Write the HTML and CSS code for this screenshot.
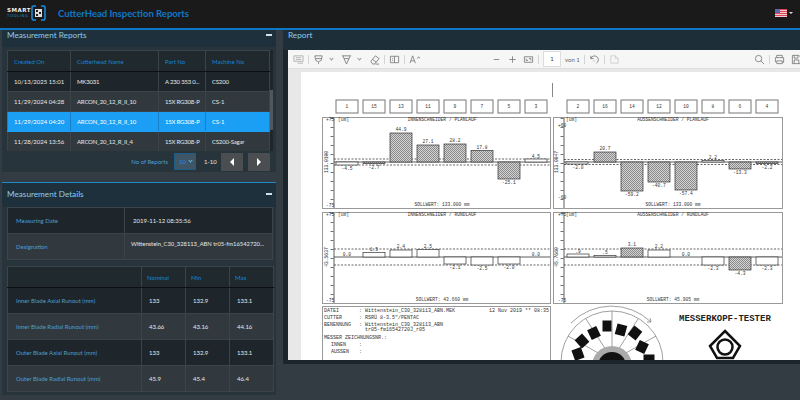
FILE: index.html
```html
<!DOCTYPE html>
<html lang="en">
<head>
    <meta charset="UTF-8">
    <title>CutterHead Inspection Reports</title>
    <link rel="stylesheet" href="styles.css">
</head>
<body>
    <header class="topbar">
        <div class="logo">
            <div class="logo-words">
                <span class="logo-smart">SMART</span>
                <span class="logo-tooling">TOOLING</span>
            </div>
            <svg class="logo-mark" width="15" height="16" viewBox="0 0 15 16">
                <path d="M5 1H2.500Q1 1 1 2.500V13.500Q1 15 2.500 15H5M10 1H12.500Q14 1 14 2.500V13.500Q14 15 12.500 15H10" fill="none" stroke="#1a8fe0" stroke-width="1.500"/>
                <rect x="4" y="4" width="7" height="8" fill="#ddd"/>
                <path d="M5 5h2v2H5zM8 7h2v2H8zM5 9h2v2H5z" fill="#222"/>
            </svg>
        </div>
        <h1 class="app-title">CutterHead Inspection Reports</h1>
        <div class="lang">
            <svg width="12" height="8" viewBox="0 0 12 8">
                <rect width="12" height="8" fill="#f4c8cc"/>
                <path d="M0 .5h12M0 2.500h12M0 4.500h12M0 6.500h12" stroke="#d9485a" stroke-width="1"/>
                <rect width="5" height="4" fill="#5a68a8"/>
            </svg>
            <span class="caret"></span>
        </div>
    </header>

    <main class="layout">
        <div class="left-col">
            <section class="panel panel-reports">
                <div class="panel-head">
                    <h2>Measurement Reports</h2>
                    <span class="collapse"></span>
                </div>
                <div class="reports-box">
                    <table class="grid reports">
                        <colgroup>
                            <col class="c-date"><col class="c-name"><col class="c-part"><col class="c-machine">
                        </colgroup>
                        <thead>
                            <tr><th>Created On</th><th>Cutterhead Name</th><th>Part No</th><th>Machine No</th></tr>
                        </thead>
                        <tbody>
                            <tr><td>10/13/2025 15:01</td><td>MK3031</td><td>A 230 353 0...</td><td>CS200</td></tr>
                            <tr class="alt"><td>11/29/2024 04:28</td><td>ARCON_20_12_R_II_10</td><td>15X RG308-P</td><td>CS-1</td></tr>
                            <tr class="selected"><td>11/29/2024 04:20</td><td>ARCON_20_12_R_II_10</td><td>15X RG308-P</td><td>CS-1</td></tr>
                            <tr class="alt"><td>11/28/2024 13:56</td><td>ARCON_20_12_R_II_4</td><td>15X RG308-P</td><td>CS200-Sagar</td></tr>
                        </tbody>
                    </table>
                    <div class="scrollbar"><div class="thumb"></div></div>
                </div>
                <div class="pager">
                    <span class="pager-label">No of Reports</span>
                    <span class="page-size">10 <i class="chev"></i></span>
                    <span class="page-range">1-10</span>
                    <button class="page-btn"><span class="tri-left"></span></button>
                    <button class="page-btn"><span class="tri-right"></span></button>
                </div>
            </section>

            <section class="panel panel-details">
                <div class="panel-head head-tall">
                    <h2>Measurement Details</h2>
                    <span class="collapse"></span>
                </div>
                <table class="grid info">
                    <colgroup><col class="c-key"><col></colgroup>
                    <tr><td class="key">Measuring Date</td><td>2019-11-12 08:35:56</td></tr>
                    <tr class="alt"><td class="key">Designation</td><td class="top">Wittenstein_C30_328113_ABN tr05-fm16542720...</td></tr>
                </table>
                <table class="grid limits">
                    <colgroup><col class="c-label"><col class="c-num"><col class="c-num"><col class="c-num"></colgroup>
                    <thead>
                        <tr><th></th><th>Nominal</th><th>Min</th><th>Max</th></tr>
                    </thead>
                    <tbody>
                        <tr><td class="key">Inner Blade Axial Runout (mm)</td><td>133</td><td>132.9</td><td>133.1</td></tr>
                        <tr class="alt"><td class="key">Inner Blade Radial Runout (mm)</td><td>43.66</td><td>43.16</td><td>44.16</td></tr>
                        <tr><td class="key">Outer Blade Axial Runout (mm)</td><td>133</td><td>132.9</td><td>133.1</td></tr>
                        <tr class="alt"><td class="key">Outer Blade Radial Runout (mm)</td><td>45.9</td><td>45.4</td><td>46.4</td></tr>
                    </tbody>
                </table>
            </section>
        </div>

        <section class="panel panel-report">
            <div class="panel-head head-report">
                <h2>Report</h2>
            </div>
            <div class="viewer">
                <div class="toolbar">
                    <svg class="ico i-list" viewBox="0 0 12 12"><path d="M1 2h10v6H1zM3 4h6M3 6h6M5 10h6"/></svg>
                    <span class="sep"></span>
                    <svg class="ico" viewBox="0 0 12 12"><path d="M2 2h8M2 2l1 5q3 3 6 0l1-5M3 5h6M6 9v2"/></svg>
                    <span class="down"></span>
                    <svg class="ico gap-l" viewBox="0 0 12 12"><path d="M1 2h10M2 2l4 9 4-9M3.500 5h5"/></svg>
                    <span class="down"></span>
                    <svg class="ico gap-l" viewBox="0 0 12 12"><path d="M2 8l5-6 4 3-5 6H4zM4 6l4 3M7 11h4"/></svg>
                    <span class="sep"></span>
                    <svg class="ico" viewBox="0 0 12 12"><path d="M1.500 2.500h9v7h-9zM6 2.500v7M3.500 5h1M3.500 7h1"/></svg>
                    <span class="sep"></span>
                    <svg class="ico" viewBox="0 0 12 12"><path d="M1 10l3-8 3 8M2.200 7.500h3.600M9 5l1.500-2L12 5"/></svg>
                    <span class="tool-mid">
                        <svg class="ico" viewBox="0 0 12 12"><path d="M3 6h6"/></svg>
                        <svg class="ico gap-m" viewBox="0 0 12 12"><path d="M2.500 6h7M6 2.500v7"/></svg>
                        <svg class="ico gap-m" viewBox="0 0 12 12"><path d="M1.500 3h9v6h-9zM3.500 5v2h2M8.500 7V5h-2"/></svg>
                        <span class="sep"></span>
                        <span class="page-input">1</span>
                        <span class="page-of">von 1</span>
                        <span class="sep"></span>
                        <svg class="ico" viewBox="0 0 12 12"><path d="M2 5a4.200 4.200 0 1 1 6 5M2 2v3h3M5 7.500h1"/></svg>
                        <span class="sep"></span>
                        <svg class="ico faint" viewBox="0 0 12 12"><path d="M2 2h5l3 3v5H2zM7 2v3h3"/></svg>
                    </span>
                    <span class="tool-end">
                        <svg class="ico" viewBox="0 0 12 12"><circle cx="5" cy="5" r="3.500"/><path d="M7.500 7.500l3.500 3.500"/></svg>
                        <span class="sep"></span>
                        <svg class="ico" viewBox="0 0 12 12"><path d="M3 4V1.500h6V4M1.500 9V4h9v5H9M3 7.500h6v3H3z"/></svg>
                        <svg class="ico gap-save" viewBox="0 0 12 12"><path d="M1.500 1.500h7l2 2v7h-9zM3.500 1.500v3h4v-3M3.500 10.500v-4h5v4"/></svg>
                    </span>
                </div>
                <div class="viewer-body">
                    <div class="page">
                        <svg class="sheet" viewBox="301 72 499 288" preserveAspectRatio="xMinYMin slice">
                            <defs>
                                <pattern id="hatch" width="2" height="2" patternUnits="userSpaceOnUse">
                                    <rect width="2" height="2" fill="#d4d4d4"/>
                                    <rect width="1" height="1" fill="#8a8a8a"/>
                                    <rect x="1" y="1" width="1" height="1" fill="#8a8a8a"/>
                                </pattern>
                            </defs>

                            <rect class="mark" x="552" y="83" width="1" height="14"/>

                            <!-- blade numbers -->
                            <g class="slot">
                                <rect x="336" y="100" width="22" height="13"/><rect x="363" y="100" width="22" height="13"/><rect x="390" y="100" width="22" height="13"/><rect x="417" y="100" width="22" height="13"/>
                                <rect x="444" y="100" width="22" height="13"/><rect x="471" y="100" width="22" height="13"/><rect x="498" y="100" width="22" height="13"/><rect x="525" y="100" width="22" height="13"/>
                                <rect x="567" y="100" width="22" height="13"/><rect x="594" y="100" width="22" height="13"/><rect x="621" y="100" width="22" height="13"/><rect x="648" y="100" width="22" height="13"/>
                                <rect x="675" y="100" width="22" height="13"/><rect x="702" y="100" width="22" height="13"/><rect x="729" y="100" width="22" height="13"/><rect x="756" y="100" width="22" height="13"/>
                            </g>
                            <g class="txt mid">
                                <text x="347" y="108">1</text><text x="374" y="108">15</text><text x="401" y="108">13</text><text x="428" y="108">11</text>
                                <text x="455" y="108">9</text><text x="482" y="108">7</text><text x="509" y="108">5</text><text x="536" y="108">3</text>
                                <text x="578" y="108">2</text><text x="605" y="108">16</text><text x="632" y="108">14</text><text x="659" y="108">12</text>
                                <text x="686" y="108">10</text><text x="713" y="108">8</text><text x="740" y="108">6</text><text x="767" y="108">4</text>
                            </g>

                            <!-- chart frames -->
                            <g class="frame">
                                <rect x="322.500" y="117.500" width="228" height="91"/>
                                <rect x="553.500" y="117.500" width="229" height="91"/>
                                <rect x="322.500" y="212.500" width="228" height="91"/>
                                <rect x="553.500" y="212.500" width="229" height="91"/>
                            </g>
                            <g class="axis">
                                <path d="M334 118V208M564 118V208M334 213V303M564 213V303"/>
                                <path d="M334 162H550M564 162H782M334 257H550M564 257H782"/>
                            </g>
                            <g class="ticks">
                                <path d="M332 118V208M562 118V208M332 213V303M562 213V303"/>
                            </g>
                            <g class="limit">
                                <path d="M334 159H550M334 165H550M564 159.500H782M564 164.500H782"/>
                                <path d="M334 249H550M334 265H550M564 249H782M564 265H782"/>
                            </g>

                            <!-- planlauf bars -->
                            <g class="bar hatched">
                                <rect x="390" y="133" width="22" height="29"/><rect x="417" y="145" width="22" height="17"/><rect x="444" y="144" width="22" height="18"/><rect x="471" y="150.500" width="22" height="11.500"/>
                                <rect x="498" y="162" width="22" height="17"/><rect x="363" y="162" width="22" height="1.500"/>
                                <rect x="594" y="152" width="22" height="10"/><rect x="621" y="162" width="22" height="29"/><rect x="648" y="162" width="22" height="20"/><rect x="675" y="162" width="22" height="28"/>
                                <rect x="729" y="162" width="22" height="7"/><rect x="756" y="162" width="22" height="1.500"/>
                                <rect x="621" y="248" width="22" height="9"/><rect x="729" y="257" width="22" height="13"/>
                            </g>
                            <!-- plain bars -->
                            <g class="bar">
                                <rect x="525" y="159" width="22" height="3"/><rect x="336" y="162" width="22" height="3"/><rect x="566" y="162" width="22" height="2"/><rect x="702" y="160.500" width="22" height="1.500"/>
                                <rect x="363" y="252.500" width="22" height="4.500"/><rect x="390" y="250" width="22" height="7"/><rect x="417" y="249.500" width="22" height="7.500"/>
                                <rect x="444" y="257" width="22" height="7"/><rect x="471" y="257" width="22" height="8"/><rect x="498" y="257" width="22" height="7"/>
                                <rect x="567" y="254" width="22" height="3"/><rect x="594" y="255.500" width="22" height="1.500"/><rect x="648" y="250" width="22" height="7"/>
                                <rect x="702" y="257" width="22" height="8"/><rect x="756" y="257" width="22" height="8"/>
                            </g>

                            <g class="txt">
                                <text x="326" y="121">+75</text><text x="338" y="121">[um]</text>
                                <text x="326" y="207">-75</text>
                                <text x="566" y="121">[um]</text><text x="558" y="127">+60</text><text x="558" y="199">-60</text>
                                <text x="326" y="216">+75</text><text x="338" y="216">[um]</text><text x="326" y="302">-75</text>
                                <text x="558" y="216">+75</text><text x="566" y="216">[um]</text><text x="558" y="302">-75</text>
                                <text class="side" transform="translate(328 162) rotate(-90)">133.0100</text>
                                <text class="side" transform="translate(558 162) rotate(-90)">133.0047</text>
                                <text class="side" transform="translate(328 257) rotate(-90)">43.5637</text>
                                <text class="side" transform="translate(558 257) rotate(-90)">45.7660</text>
                            </g>
                            <g class="txt mid">
                                <text x="442" y="121">INNENSCHNEIDER / PLANLAUF</text>
                                <text x="673" y="121">AUSSENSCHNEIDER / PLANLAUF</text>
                                <text x="442" y="216">INNENSCHNEIDER / RUNDLAUF</text>
                                <text x="673" y="216">AUSSENSCHNEIDER / RUNDLAUF</text>
                                <text x="442" y="206">SOLLWERT: 133.000 mm</text>
                                <text x="673" y="206">SOLLWERT: 133.000 mm</text>
                                <text x="442" y="301">SOLLWERT:  43.660 mm</text>
                                <text x="673" y="301">SOLLWERT:  45.905 mm</text>

                                <text x="347" y="170">-4.5</text><text x="374" y="169">-2.7</text><text x="401" y="131">44.9</text><text x="428" y="143">27.1</text>
                                <text x="455" y="142">28.2</text><text x="482" y="149">17.8</text><text x="509" y="184">-25.1</text><text x="536" y="158">4.5</text>
                                <text x="578" y="169">-2.0</text><text x="605" y="150">20.7</text><text x="632" y="196">-59.2</text><text x="659" y="187">-40.7</text>
                                <text x="686" y="195">-57.4</text><text x="713" y="159">2.2</text><text x="740" y="174">-13.3</text><text x="767" y="169">-2.2</text>

                                <text x="347" y="256">0.0</text><text x="374" y="251">1.5</text><text x="401" y="248">2.4</text><text x="428" y="248">2.5</text>
                                <text x="455" y="269">-2.1</text><text x="482" y="270">-2.5</text><text x="509" y="269">-2.0</text><text x="536" y="256">0.0</text>
                                <text x="578" y="253">.9</text><text x="605" y="254">.5</text><text x="632" y="246">3.1</text><text x="659" y="248">2.2</text>
                                <text x="686" y="256">0.0</text><text x="713" y="270">-2.3</text><text x="740" y="275">-4.3</text><text x="767" y="270">-2.3</text>
                            </g>

                            <!-- file data box -->
                            <rect class="frame-line" x="322.500" y="306.500" width="228" height="70"/>
                            <g class="data">
                                <text x="324" y="312">DATEI</text><text x="359" y="312">:</text><text x="365" y="312">Wittenstein_C30_328113_ABN.MEK</text>
                                <text x="489" y="312">12 Nov 2019 ** 08:35</text>
                                <text x="324" y="318.500">CUTTER</text><text x="359" y="318.500">:</text><text x="365" y="318.500">RSRÜ 8-3.5"/PENTAC</text>
                                <text x="324" y="325.500">BENENNUNG</text><text x="359" y="325.500">:</text><text x="365" y="325.500">Wittenstein_C30_328113_ABN</text>
                                <text x="365" y="330.500">tr05-fm16542720J_r05</text>
                                <text x="324" y="339">MESSER ZEICHNUNGSNR.:</text>
                                <text x="331" y="346">INNEN</text><text x="359" y="346">:</text>
                                <text x="331" y="352.500">AUSSEN</text><text x="359" y="352.500">:</text>
                            </g>

                            <!-- cutter head diagram -->
                            <path class="thin" d="M571 323A57 57 0 0 1 651 322M651 322l-4 0M651 322l-1 -4"/>
                            <circle class="thin" cx="612" cy="362" r="51"/>
                            <path class="thin" d="M612 311V350M586 319L606 350M638 319L618 350M568 336L600 354M656 336L624 354"/>
                            <circle cx="612" cy="366" r="20" fill="#aaa"/>
                            <circle cx="612" cy="366" r="14" fill="#111"/>
                            <g class="block">
                                <rect x="-5" y="-5.500" width="10" height="11" transform="translate(578 354) rotate(-20)"/>
                                <rect x="-5" y="-5.500" width="10" height="11" transform="translate(582 341) rotate(-42)"/>
                                <rect x="-5" y="-5.500" width="10" height="11" transform="translate(594 333) rotate(-25)"/>
                                <rect x="-4.500" y="-5.500" width="9" height="11" transform="translate(607 326)"/>
                                <rect x="-5" y="-5.500" width="10" height="11" transform="translate(621 330) rotate(15)"/>
                                <rect x="-5" y="-5.500" width="10" height="11" transform="translate(635 333) rotate(38)"/>
                                <rect x="-5" y="-5.500" width="10" height="11" transform="translate(642 347) rotate(25)"/>
                                <rect x="-5.500" y="-5.500" width="11" height="11" transform="translate(649 360)"/>
                            </g>
                            <text class="brand" x="679" y="321">MESSERKOPF-TESTER</text>
                            <path class="brand-mark" d="M725 331L740 346L733 358H717L710 346Z"/>
                            <circle class="brand-mark" cx="725" cy="347" r="7.500"/>
                        </svg>
                    </div>
                </div>
            </div>
        </section>
    </main>
</body>
</html>
```

FILE: styles.css
```css
* {
    box-sizing: border-box;
}
body {
    margin: 0;
    width: 800px;
    height: 400px;
    overflow: hidden;
    background-color: #323c42;
    font-family: Lato, "Open Sans", sans-serif;
    color: #e4e8ea;
}

/* top bar */
.topbar {
    display: flex;
    align-items: center;
    height: 30px;
    padding: 0 7px 2px 7px;
    background-color: #1a1a1b;
    border-bottom: 2px solid #0f78c6;
}
.logo {
    display: flex;
    align-items: center;
    gap: 0;
    width: 51px;
}
.logo-words {
    display: flex;
    flex-direction: column;
    width: 24px;
    line-height: 5px;
    font-family: "DejaVu Sans", sans-serif;
}
.logo-smart {
    font-size: 5.500px;
    font-weight: bold;
    letter-spacing: .5px;
    color: #f0f0f0;
}
.logo-tooling {
    font-size: 3.800px;
    letter-spacing: .6px;
    color: #1a8fe0;
}
.app-title {
    margin: 0;
    font-size: 9.500px;
    font-weight: bold;
    color: #0f78c6;
}
.lang {
    display: flex;
    align-items: center;
    gap: 2px;
    margin-left: auto;
}
.caret {
    border: 2px solid transparent;
    border-top: 2px solid #ddd;
    border-bottom: 0;
}

/* columns */
.layout {
    display: flex;
    gap: 7px;
    padding-left: 2px;
}
.left-col {
    display: flex;
    flex-direction: column;
    gap: 10px;
    width: 274px;
}
.panel {
    background-color: #27343b;
}
.panel-head {
    display: flex;
    align-items: center;
    justify-content: space-between;
    height: 17px;
    padding: 0 4px 8px 5px;
    background-color: #1e303b;
}
.panel-head h2 {
    margin: 0;
    font-size: 8.200px;
    font-weight: normal;
    color: #8fcbea;
}
.panel-head.head-tall {
    height: 25px;
    padding-bottom: 3px;
    border-top: 1px solid #1f88c8;
}
.panel-head.head-report {
    height: 20px;
    padding-bottom: 11px;
    background-color: #1d2e39;
}
.collapse {
    width: 6px;
    height: 2px;
    background-color: #cfe0ea;
}

/* tables */
.grid {
    width: 100%;
    table-layout: fixed;
    border-collapse: collapse;
    background-color: #1e262b;
    font-size: 6px;
}
.grid th {
    padding: 0 0 0 6px;
    height: 21px;
    text-align: left;
    font-weight: normal;
    color: #1785d8;
    background-color: #20292e;
    border: 1px solid #3b4449;
    border-bottom: 1px solid #0c1012;
}
.grid td {
    padding: 0 0 0 6px;
    border: 1px solid #3b4449;
    color: #e4e8ea;
    white-space: nowrap;
    overflow: hidden;
}
.grid .alt td {
    background-color: #31393e;
}
.grid .key {
    padding-left: 8px;
    color: #4d9fd3;
}
.reports-box {
    display: flex;
    height: 101px;
    margin: 3px 3px 0 5px;
    overflow: hidden;
}
.reports {
    width: 263px;
    height: 101px;
}
.reports td {
    height: 20px;
}
.reports td:nth-child(n+2) {
    letter-spacing: -.2px;
}
.reports .selected td {
    background-color: #1a9ff5;
    border-color: #1a9ff5 #1580c8;
    color: #fff;
}
.c-date { width: 63px; }
.c-name { width: 88px; }
.c-part { width: 47px; }
.scrollbar {
    width: 3px;
    padding-top: 40px;
    background-color: #1e262b;
}
.thumb {
    height: 40px;
    background-color: #50585d;
}

/* pager */
.pager {
    display: flex;
    align-items: center;
    height: 21px;
    padding-right: 6px;
    justify-content: flex-end;
    font-size: 6px;
}
.pager-label {
    margin-right: 6px;
    color: #4d9fd3;
}
.page-size {
    display: flex;
    align-items: center;
    gap: 3px;
    width: 22px;
    height: 17px;
    padding-left: 4px;
    border: 1px solid #1d5d85;
    background-color: #3f5666;
    color: #1a8fe0;
}
.chev {
    width: 3px;
    height: 3px;
    margin-top: -2px;
    border-right: 1px solid #5ab4ea;
    border-bottom: 1px solid #5ab4ea;
    transform: rotate(45deg);
}
.page-range {
    width: 13px;
    margin-left: 8px;
}
.page-btn {
    display: flex;
    align-items: center;
    justify-content: center;
    width: 22px;
    height: 18px;
    margin-left: 4px;
    padding: 0;
    border: 0;
    border-radius: 1px;
    background-color: #4b4e50;
}
.page-btn + .page-btn {
    margin-left: 5px;
}
.tri-left {
    border: 4px solid transparent;
    border-right: 4px solid #fff;
    border-left: 0;
}
.tri-right {
    border: 4px solid transparent;
    border-left: 4px solid #fff;
    border-right: 0;
}

/* details */
.panel-details {
    padding-bottom: 3px;
}
.info {
    width: 266px;
    margin: 0 0 0 5px;
}
.info td {
    height: 26px;
}
.info td:last-child {
    padding-left: 8px;
}
.info td.top {
    padding: 0 0 6px 6px;
    font-size: 5.800px;
}
.c-key { width: 117px; }
.limits {
    width: 266px;
    margin: 6px 0 0 5px;
}
.limits th {
    padding-left: 5px;
}
.limits td {
    height: 26px;
}
.limits td:not(.key) {
    padding-left: 7px;
}
.c-label { width: 134px; }
.c-num { width: 44px; }

/* report viewer */
.panel-report {
    flex: 1;
    height: 334px;
    padding-bottom: 4px;
    background-color: #1c252b;
}
.viewer {
    display: flex;
    flex-direction: column;
    height: 310px;
    margin-left: 5px;
    background-color: #e8e8e8;
}
.toolbar {
    display: flex;
    align-items: center;
    flex-shrink: 0;
    height: 19px;
    padding-left: 5px;
    background-color: #f6f6f6;
    border-bottom: 1px solid #ddd;
    overflow: hidden;
}
.ico {
    flex-shrink: 0;
    width: 11px;
    height: 11px;
    fill: none;
    stroke: #777;
    stroke-width: .9;
}
.i-list {
    stroke: #aaa;
}
.faint {
    stroke: #ccc;
}
.sep {
    flex-shrink: 0;
    width: 1px;
    height: 9px;
    margin: 0 4px;
    background-color: #d4d4d4;
}
.down {
    width: 3px;
    height: 3px;
    margin: -2px 0 0 6px;
    border-right: 1px solid #999;
    border-bottom: 1px solid #999;
    transform: rotate(45deg);
}
.gap-l {
    margin-left: 8px;
}
.gap-m {
    margin-left: 5px;
}
.gap-save {
    margin-left: 6px;
    margin-right: -2px;
}
.tool-mid {
    display: flex;
    align-items: center;
    margin-left: 71px;
}
.tool-end {
    display: flex;
    align-items: center;
    margin-left: auto;
}
.page-input {
    width: 18px;
    height: 16px;
    border: 1px solid #ddd;
    background-color: #fff;
    text-align: center;
    font-size: 6px;
    line-height: 14px;
    color: #444;
}
.page-of {
    margin-left: 4px;
    font-size: 6px;
    color: #666;
}
.viewer-body {
    flex: 1;
    min-height: 0;
    padding: 3px 0 0 13px;
    overflow: hidden;
}
.page {
    height: 100%;
    background-color: #fff;
}
.sheet {
    display: block;
    width: 499px;
    height: 288px;
}

/* drawing on the sheet */
.sheet text {
    font-family: "Liberation Mono", monospace;
}
.mark {
    fill: #888;
}
.slot rect {
    fill: #fff;
    stroke: #777;
    stroke-width: 1;
}
.frame rect, .frame-line {
    fill: none;
    stroke: #999;
    stroke-width: 1;
}
.axis path {
    fill: none;
    stroke: #333;
    stroke-width: .8;
}
.ticks path {
    fill: none;
    stroke: #444;
    stroke-width: 3;
    stroke-dasharray: .7 8.300;
}
.limit path {
    fill: none;
    stroke: #222;
    stroke-width: .7;
    stroke-dasharray: 2 1.500;
}
.bar rect {
    fill: #fff;
    stroke: #333;
    stroke-width: .7;
}
.bar.hatched rect {
    fill: url(#hatch);
}
.txt text {
    font-size: 4.600px;
    fill: #333;
}
.txt.mid text, .side {
    text-anchor: middle;
}
.data text {
    font-size: 5px;
    fill: #333;
}
.thin {
    fill: none;
    stroke: #777;
    stroke-width: .7;
}
.block rect {
    fill: #111;
}
.brand {
    font-size: 9px;
    font-weight: bold;
    fill: #222;
}
.brand-mark {
    fill: none;
    stroke: #111;
    stroke-width: 2.500;
}
```
